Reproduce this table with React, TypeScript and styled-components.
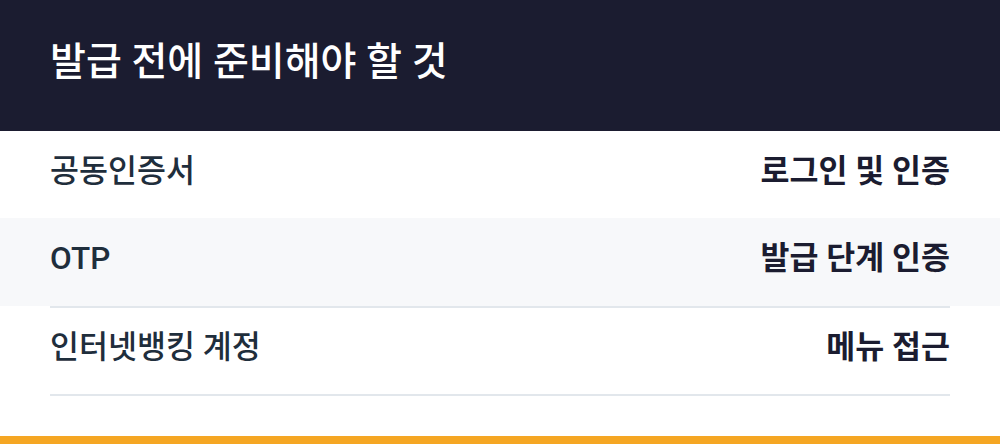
import React from "react";
import styled, { createGlobalStyle } from "styled-components";

const Global = createGlobalStyle`
  html, body { margin: 0; padding: 0; background: #ffffff; }
  body { font-family: Roboto, "Noto Sans CJK KR", sans-serif; }
`;

const Page = styled.div`
  width: 1000px;
  display: flex;
  flex-direction: column;
  background: #ffffff;
`;

const Header = styled.header`
  height: 131px;
  background: #1b1c30;
  display: flex;
  align-items: center;
  padding: 0 50px 6px;
  box-sizing: border-box;
`;

const Title = styled.h1`
  margin: 0;
  color: #ffffff;
  font-family: Roboto, "Noto Sans CJK KR", sans-serif;
  font-size: 39px;
  line-height: 1.2;
  font-weight: 500;
`;

const List = styled.div`
  display: flex;
  flex-direction: column;
  padding-bottom: 40px;
`;

const Row = styled.div<{ $shaded?: boolean; $h: number }>`
  height: ${(p) => p.$h}px;
  box-sizing: border-box;
  background: ${(p) => (p.$shaded ? "#f7f8fa" : "#ffffff")};
  display: flex;
  align-items: center;
  justify-content: space-between;
  padding: 0 50px 6px;
`;

const Label = styled.span`
  color: #1f2e3c;
  font-size: 31.5px;
  line-height: 1.2;
  font-weight: 500;
`;

const Value = styled.span`
  color: #1b1c30;
  font-size: 31.5px;
  line-height: 1.2;
  font-weight: 700;
`;

const Divider = styled.div`
  height: 2px;
  margin: 0 50px;
  background: #e2e7ec;
`;

const Accent = styled.div`
  height: 8px;
  background: #f5a623;
`;

const rows = [
  { label: "공동인증서", value: "로그인 및 인증", shaded: false, h: 87, divider: false },
  { label: "OTP", value: "발급 단계 인증", shaded: true, h: 88, divider: true },
  { label: "인터넷뱅킹 계정", value: "메뉴 접근", shaded: false, h: 86, divider: true },
];

export default function App() {
  return (
    <Page>
      <Global />
      <Header>
        <Title>발급 전에 준비해야 할 것</Title>
      </Header>
      <List>
        {rows.map((r) => (
          <React.Fragment key={r.label}>
            <Row $shaded={r.shaded} $h={r.h}>
              <Label>{r.label}</Label>
              <Value>{r.value}</Value>
            </Row>
            {r.divider && <Divider />}
          </React.Fragment>
        ))}
      </List>
      <Accent />
    </Page>
  );
}
